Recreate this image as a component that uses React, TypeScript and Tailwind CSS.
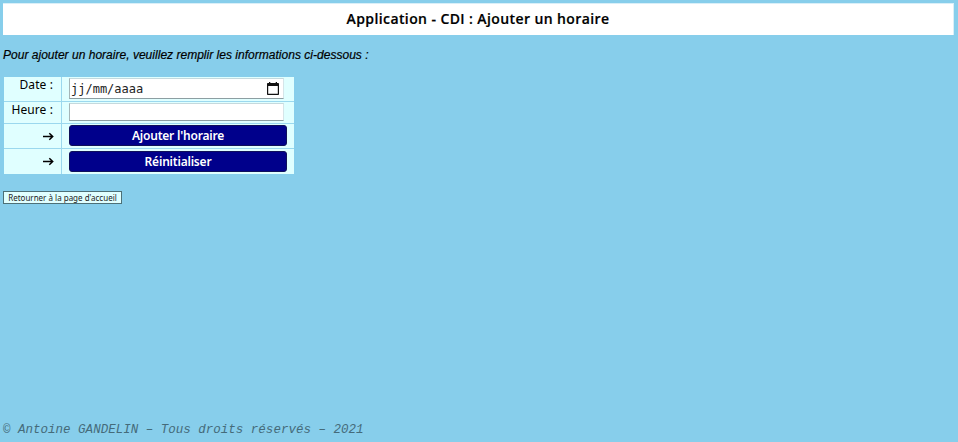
import React from "react";

function CalendarIcon() {
  return (
    <svg width="12" height="13" viewBox="0 0 12 13" className="block">
      <path d="M2 0h1.3v1H8.7V0H10v1h1.2q.8 0 .8.8v10.4q0 .8-.8.8H.8q-.8 0-.8-.8V1.8Q0 1 .8 1H2zM1.2 4v7.8h9.6V4z" fill="#111" fillRule="evenodd" />
    </svg>
  );
}

const labelCell = "flex w-[57px] shrink-0 justify-end bg-[#e0ffff] pr-[8px] whitespace-nowrap";
const arrowCell = "flex w-[57px] shrink-0 justify-end bg-[#e0ffff] pr-[7px]";
const fieldCell = "flex flex-1 bg-[#e0ffff] pl-[7px]";
const field = "w-[215px] border border-t-[#c5d9dd] border-l-[#a5b5b8] border-r-[#d5e5e9] border-b-[#8d9ea2] bg-white";
const button =
  "h-[21px] w-[218px] rounded-[3px] border border-[#10105a] bg-[#00008b] text-[12px] leading-[20px] font-semibold tracking-[-0.2px] text-white";

function Arrow() {
  return (
    <svg width="11" height="9" viewBox="0 0 11 9" className="mt-[8px] block" fill="none" stroke="#000" strokeWidth="1.5">
      <path d="M0 4.5h9.5M6.3 1.2l3.4 3.3-3.4 3.3" />
    </svg>
  );
}

export default function App() {
  return (
    <div className="flex h-[442px] w-[958px] flex-col overflow-hidden bg-[#87ceeb] pl-[3px] text-black">
      <h1 className="mt-[3px] h-8 w-[951px] shrink-0 border-t border-r border-[#d9eff8] bg-white text-center font-['Open_Sans',sans-serif] text-[14px] leading-[30px] font-semibold">
        <span className="tracking-[0.4px] [-webkit-text-stroke:0.2px_#000]">Application - CDI : Ajouter un horaire</span>
      </h1>
      <p className="mt-[12px] h-4 font-['Liberation_Sans',sans-serif] text-[12px] leading-4 tracking-[0.02px] whitespace-nowrap italic [-webkit-text-stroke:0.2px_#000]">
        Pour ajouter un horaire, veuillez remplir les informations ci-dessous :
      </p>
      <div className="mt-[14px] ml-px flex w-[290px] flex-col gap-px bg-[#9bd8ee] font-['Noto_Sans',sans-serif] text-[12px]">
        <div className="flex h-[24px] gap-px">
          <div className={labelCell}>
            <span className="leading-[16px] tracking-[0.1px]">Date :</span>
          </div>
          <div className={fieldCell}>
            <div className={`${field} mt-[1px] flex h-[21px] items-center justify-between pr-[4px] pl-px`}>
              <span className="pt-[2px] font-['DejaVu_Sans_Mono',monospace] text-[12px] leading-[19px] text-[#222]">jj/mm/aaaa</span>
              <CalendarIcon />
            </div>
          </div>
        </div>
        <div className="flex h-[21px] gap-px">
          <div className={labelCell}>
            <span className="leading-[15px] tracking-[0.1px]">Heure :</span>
          </div>
          <div className={fieldCell}>
            <div className={`${field} mt-[1px] h-[18px]`} />
          </div>
        </div>
        <div className="flex h-[24px] gap-px">
          <div className={arrowCell}>
            <Arrow />
          </div>
          <div className={fieldCell}>
            <button className={`${button} mt-[1px]`}>Ajouter l'horaire</button>
          </div>
        </div>
        <div className="flex h-[25px] gap-px">
          <div className={arrowCell}>
            <Arrow />
          </div>
          <div className={fieldCell}>
            <button className={`${button} mt-[2px]`}>Réinitialiser</button>
          </div>
        </div>
      </div>
      <button className="mt-[17px] h-[13px] w-[119px] shrink-0 border border-[#4d7077] bg-[#e0ffff] font-['Noto_Sans',sans-serif] text-[8px] leading-[11px] whitespace-nowrap text-[#222]">
        Retourner à la page d'accueil
      </button>
      <footer className="mt-auto mb-[4px] font-['Liberation_Mono',monospace] text-[12.53px] leading-4 whitespace-pre text-[#456b7a] italic">
        © Antoine GANDELIN – Tous droits réservés – 2021
      </footer>
    </div>
  );
}
